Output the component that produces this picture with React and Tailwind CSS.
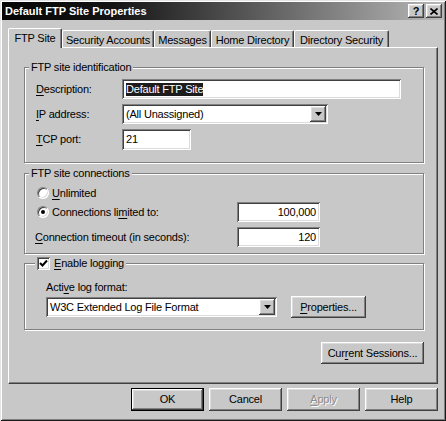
import React from "react";

const RAISED =
  "shadow-[inset_-1px_-1px_#404040,inset_1px_1px_#ffffff,inset_-2px_-2px_#808080,inset_2px_2px_#dcdcdc]";
const SUNKEN =
  "shadow-[inset_1px_1px_#808080,inset_-1px_-1px_#ffffff,inset_2px_2px_#404040,inset_-2px_-2px_#dcdcdc]";

function U({ children }) {
  return <span className="underline underline-offset-[2px] decoration-1">{children}</span>;
}

function Field({ className = "", children }) {
  return (
    <div className={`bg-white ${SUNKEN} flex items-center px-[4px] ${className}`}>{children}</div>
  );
}

function Arrow() {
  return (
    <div className={`w-[16px] h-[16px] bg-[#c8c8c8] ${RAISED} flex items-center justify-center`}>
      <svg width="7" height="4" viewBox="0 0 7 4">
        <path d="M0 0h7L3.5 4z" fill="#000" />
      </svg>
    </div>
  );
}

function Combo({ className = "", children }) {
  return (
    <div className={`bg-white ${SUNKEN} flex items-center pl-[4px] pr-[2px] h-[20px] ${className}`}>
      <span className="flex-1">{children}</span>
      <Arrow />
    </div>
  );
}

function Btn({ className = "", children }) {
  return (
    <div className={`bg-[#c8c8c8] ${RAISED} flex items-center justify-center ${className}`}>
      {children}
    </div>
  );
}

function Radio({ checked }) {
  return (
    <div className="w-[12px] h-[12px] rounded-full border border-t-[#808080] border-l-[#808080] border-b-white border-r-white bg-white shadow-[inset_1px_1px_#404040,inset_-1px_-1px_#dcdcdc] flex items-center justify-center">
      {checked && <div className="w-[4px] h-[4px] rounded-full bg-black" />}
    </div>
  );
}

function Check() {
  return (
    <div className={`w-[13px] h-[13px] bg-white ${SUNKEN} flex items-center justify-center`}>
      <svg width="9" height="9" viewBox="0 0 9 9">
        <path d="M1 4l2.5 2.5L8 1.5" stroke="#000" strokeWidth="2" fill="none" />
      </svg>
    </div>
  );
}

const GROUP =
  "border border-[#808080] shadow-[inset_1px_1px_#ffffff,1px_1px_#ffffff] w-[400px]";

export default function App() {
  return (
    <div className="w-[446px] h-[421px] bg-[#c8c8c8] p-[2px] flex flex-col text-[11px] leading-[13px] text-black font-['Liberation_Sans',Arial,sans-serif] tracking-[-0.2px] shadow-[inset_1px_1px_#e4e4e4,inset_-1px_-1px_#1a1a1a,inset_2px_2px_#ffffff,inset_-2px_-2px_#808080]">
      {/* Title bar */}
      <div className="h-[18px] flex items-center pl-[3px] pr-[2px] bg-[linear-gradient(to_right,#050505,#141414_25%,#b8b8b8)]">
        <span className="text-white font-bold tracking-normal">Default FTP Site Properties</span>
        <div className="ml-auto flex gap-[2px]">
          <Btn className="w-[16px] h-[14px] font-bold text-[11px] leading-none tracking-normal">?</Btn>
          <Btn className="w-[16px] h-[14px]">
            <svg width="8" height="7" viewBox="0 0 8 7">
              <path d="M0.5 0.5l7 6M7.5 0.5l-7 6" stroke="#000" strokeWidth="1.6" />
            </svg>
          </Btn>
        </div>
      </div>

      {/* Body */}
      <div className="flex-1 flex flex-col px-[6px] pt-[8px]">
        {/* Tabs */}
        <div className="flex items-end h-[20px] relative z-10 -mb-[1px]">
          <div className="w-[54px] h-[20px] bg-[#c8c8c8] border-l border-t border-white border-r border-r-[#404040] rounded-t-[2px] shadow-[inset_-1px_0_#808080] flex items-center justify-center pb-[1px]">
            FTP Site
          </div>
          {[
            ["Security Accounts", "w-[92px]"],
            ["Messages", "w-[57px]"],
            ["Home Directory", "w-[83px]"],
            ["Directory Security", "w-[95px]"],
          ].map(([t, w]) => (
            <div
              key={t}
              className={`${w} h-[17px] mb-[1px] border-l border-t border-white border-r border-r-[#404040] rounded-t-[2px] shadow-[inset_-1px_0_#808080] flex items-center justify-center pt-[2px]`}
            >
              {t}
            </div>
          ))}
        </div>

        {/* Panel */}
        <div className="h-[337px] w-[430px] border-t border-l border-white border-r border-b border-r-[#404040] border-b-[#404040] shadow-[inset_-1px_-1px_#808080] flex flex-col pl-[15px] pt-[13px]">
          {/* Group 1 */}
          <fieldset className={`${GROUP} h-[102px]`}>
            <legend className="ml-[4px] px-[2px] bg-[#c8c8c8]">FTP site identification</legend>
            <div className="flex flex-col gap-[5px] pl-[11px] pt-[5px]">
              <div className="flex items-center h-[20px]">
                <span className="w-[86px]">
                  <U>D</U>escription:
                </span>
                <Field className="w-[279px] h-[20px]">
                  <span className="bg-[#1c1c1c] text-white">Default FTP Site</span>
                </Field>
              </div>
              <div className="flex items-center h-[20px]">
                <span className="w-[86px]">
                  <U>I</U>P address:
                </span>
                <Combo className="w-[206px]">(All Unassigned)</Combo>
              </div>
              <div className="flex items-center h-[20px]">
                <span className="w-[86px]">
                  <U>T</U>CP port:
                </span>
                <Field className="w-[69px] h-[21px]">21</Field>
              </div>
            </div>
          </fieldset>

          {/* Group 2 */}
          <fieldset className={`${GROUP} h-[87px] mt-[4px]`}>
            <legend className="ml-[4px] px-[2px] bg-[#c8c8c8]">FTP site connections</legend>
            <div className="flex flex-col pl-[12px] pt-[5px]">
              <div className="flex items-center h-[16px] gap-[3px]">
                <Radio />
                <span>
                  <U>U</U>nlimited
                </span>
              </div>
              <div className="flex items-center h-[20px] mt-[1px]">
                <div className="w-[200px] flex items-center gap-[3px]">
                  <Radio checked />
                  <span>
                    Connections li<U>m</U>ited to:
                  </span>
                </div>
                <Field className="w-[83px] h-[20px] justify-end">100,000</Field>
              </div>
              <div className="flex items-center h-[20px] mt-[5px] -ml-[2px]">
                <span className="w-[202px]">
                  <U>C</U>onnection timeout (in seconds):
                </span>
                <Field className="w-[83px] h-[20px] justify-end">120</Field>
              </div>
            </div>
          </fieldset>

          {/* Group 3 */}
          <fieldset className={`${GROUP} h-[73px] mt-[3px]`}>
            <legend className="ml-[10px] px-[2px] bg-[#c8c8c8]">
              <div className="flex items-center gap-[4px] h-[13px]">
                <Check />
                <span>
                  <U>E</U>nable logging
                </span>
              </div>
            </legend>
            <div className="flex flex-col pl-[21px] pt-[11px]">
              <span className="h-[13px]">
                Acti<U>v</U>e log format:
              </span>
              <div className="flex items-center h-[22px] mt-[2px] gap-[14px]">
                <Combo className="w-[231px]">W3C Extended Log File Format</Combo>
                <Btn className="w-[75px] h-[22px]">
                  <span>
                    <U>P</U>roperties...
                  </span>
                </Btn>
              </div>
            </div>
          </fieldset>

          <div className="w-[400px] flex justify-end mt-[12px]">
            <Btn className="w-[103px] h-[22px]">
              <span>
                Cur<U>r</U>ent Sessions...
              </span>
            </Btn>
          </div>
        </div>

        {/* Bottom buttons */}
        <div className="flex justify-end gap-[5px] mt-[4px]">
          <div className="w-[73px] h-[23px] border border-black">
            <Btn className="w-full h-full">OK</Btn>
          </div>
          <Btn className="w-[73px] h-[23px]">Cancel</Btn>
          <Btn className="w-[73px] h-[23px] text-[#8c8c8c] [text-shadow:1px_1px_#ffffff]">
            <span>
              <U>A</U>pply
            </span>
          </Btn>
          <Btn className="w-[73px] h-[23px]">Help</Btn>
        </div>
      </div>
    </div>
  );
}
